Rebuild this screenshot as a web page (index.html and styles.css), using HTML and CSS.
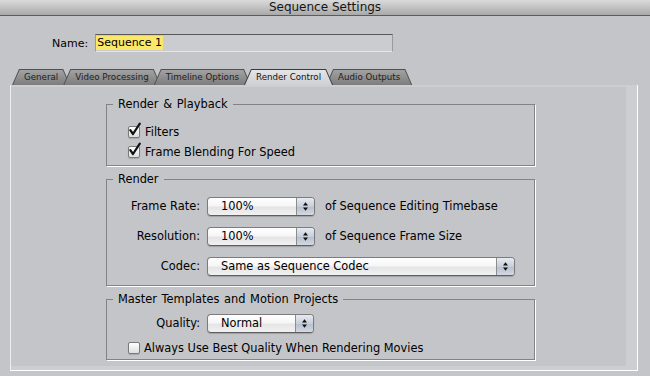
FILE: index.html
```html
<!DOCTYPE html>
<html>
<head>
<meta charset="utf-8">
<link rel="stylesheet" href="styles.css">
</head>
<body>
<div class="titlebar">Sequence Settings</div>
<div class="name-row">
  <span class="name-label">Name:</span>
  <div class="name-field"><span class="sel">Sequence 1</span></div>
</div>
<div class="tabs">
  <div class="tab"><span class="tab-in">General</span></div>
  <div class="tab"><span class="tab-in">Video Processing</span></div>
  <div class="tab"><span class="tab-in">Timeline Options</span></div>
  <div class="tab active"><span class="tab-in">Render Control</span></div>
  <div class="tab"><span class="tab-in">Audio Outputs</span></div>
</div>
<div class="panel">
  <div class="panel-body">
    <fieldset class="group g1">
      <legend>Render &amp; Playback</legend>
      <div class="checks">
        <div class="cb-row"><span class="cb"><svg class="check" viewBox="0 0 13 14"><path d="M2.3 7.2 L5 11 L11.8 0.6"/></svg></span><span>Filters</span></div>
        <div class="cb-row"><span class="cb"><svg class="check" viewBox="0 0 13 14"><path d="M2.3 7.2 L5 11 L11.8 0.6"/></svg></span><span>Frame Blending For Speed</span></div>
      </div>
    </fieldset>
    <fieldset class="group g2">
      <legend>Render</legend>
      <div class="form">
        <span class="lbl">Frame Rate:</span>
        <div class="popup"><span class="popup-text">100%</span><span class="arrows"><svg viewBox="0 0 7 11"><path d="M3.5 1.2 L6 4.6 L1 4.6Z M1 6.4 L6 6.4 L3.5 9.8Z"/></svg></span></div>
        <span class="note">of Sequence Editing Timebase</span>
        <span class="lbl">Resolution:</span>
        <div class="popup"><span class="popup-text">100%</span><span class="arrows"><svg viewBox="0 0 7 11"><path d="M3.5 1.2 L6 4.6 L1 4.6Z M1 6.4 L6 6.4 L3.5 9.8Z"/></svg></span></div>
        <span class="note">of Sequence Frame Size</span>
        <span class="lbl">Codec:</span>
        <div class="popup codec"><span class="popup-text">Same as Sequence Codec</span><span class="arrows"><svg viewBox="0 0 7 11"><path d="M3.5 1.2 L6 4.6 L1 4.6Z M1 6.4 L6 6.4 L3.5 9.8Z"/></svg></span></div>
      </div>
    </fieldset>
    <fieldset class="group g3">
      <legend>Master Templates and Motion Projects</legend>
      <div class="form form3">
        <span class="lbl">Quality:</span>
        <div class="popup"><span class="popup-text">Normal</span><span class="arrows"><svg viewBox="0 0 7 11"><path d="M3.5 1.2 L6 4.6 L1 4.6Z M1 6.4 L6 6.4 L3.5 9.8Z"/></svg></span></div>
      </div>
      <div class="cb-row single"><span class="cb"></span><span>Always Use Best Quality When Rendering Movies</span></div>
    </fieldset>
  </div>
</div>
</body>
</html>
```
FILE: styles.css
```css
html, body {
  margin: 0;
  padding: 0;
}
body {
  width: 650px;
  height: 376px;
  overflow: hidden;
  background: #c4c5c9;
  font-family: "DejaVu Sans", sans-serif;
  font-size: 11.4px;
  color: #000;
}
.titlebar {
  height: 15px;
  line-height: 15px;
  border-bottom: 1px solid #5c5c5c;
  background: linear-gradient(#dadada, #a9a9a9);
  text-align: center;
  font-size: 12px;
  color: #151515;
}
.name-row {
  display: flex;
  align-items: center;
  gap: 7px;
  margin-top: 18px;
  padding-left: 52px;
  height: 18px;
  font-size: 11px;
}
.name-field {
  box-sizing: border-box;
  width: 298px;
  height: 18px;
  border: 1px solid #9a9a9a;
  border-top-color: #585858;
  border-bottom-color: #e6e6e6;
  background: #cbccd0;
  display: flex;
  align-items: center;
}
.sel {
  background: #fbe86a;
  line-height: 14px;
  padding: 0 1px;
}
.tabs {
  display: flex;
  margin-top: 17px;
  padding-left: 12px;
  height: 16px;
}
.tab {
  position: relative;
  height: 16px;
  box-sizing: border-box;
  padding: 1px 1px 0 1px;
  background: #505050;
  clip-path: polygon(7px 0, calc(100% - 7px) 0, 100% 100%, 0 100%);
  margin-left: -7px;
}
.tab:first-child {
  margin-left: 0;
}
.tab-in {
  display: block;
  height: 15px;
  line-height: 15px;
  padding: 0 11px;
  font-size: 8.7px;
  color: #1e1e1e;
  background: linear-gradient(#a2a2a2, #7c7c7c);
  clip-path: polygon(6.6px 0, calc(100% - 6.6px) 0, 100% 100%, 0 100%);
}
.tab.active {
  z-index: 2;
  background: #3a3a3a;
}
.tab.active .tab-in {
  background: linear-gradient(#e4e5e7, #cfd0d4);
  color: #111;
}
.panel {
  box-sizing: border-box;
  margin-left: 10px;
  width: 628px;
  height: 286px;
  border-left: 1px solid #eeeeee;
  border-right: 1px solid #ffffff;
  border-bottom: 1px solid #ffffff;
  background: #cdced2;
  padding: 2px 11px 4px 0;
}
.panel-body {
  height: 100%;
  background: #c4c5c9;
  padding-left: 95px;
  padding-top: 10px;
  box-sizing: border-box;
}
.group {
  box-sizing: border-box;
  width: 429px;
  margin: 0;
  padding: 0;
  border: 1px solid #838383;
  box-shadow: 1px 1px 0 #ffffff;
  min-inline-size: 0;
}
.group legend {
  margin-left: 6px;
  padding: 0 5px;
  line-height: 14px;
  word-spacing: 1px;
}
.g1 {
  padding: 11px 0 3px 0;
}
.g2 {
  margin-top: 6px;
  padding: 10px 0 9px 0;
}
.g3 {
  margin-top: 6px;
  padding: 7px 0 3px 0;
}
.checks {
  padding-left: 21px;
}
.cb-row {
  display: flex;
  align-items: center;
  gap: 5px;
  height: 20px;
}
.cb-row.single {
  height: 16px;
  margin-top: 7px;
  padding-left: 21px;
  gap: 4px;
}
.cb {
  position: relative;
  display: inline-block;
  box-sizing: border-box;
  width: 12px;
  height: 12px;
  border: 1px solid #7a7a7a;
  border-radius: 2px;
  background: linear-gradient(#ffffff, #dedede);
  box-shadow: 0 1px 1px rgba(0, 0, 0, 0.15);
}
.check {
  position: absolute;
  left: -1px;
  top: -4px;
  width: 13px;
  height: 14px;
  overflow: visible;
}
.check path {
  fill: none;
  stroke: #111;
  stroke-width: 2.2;
  stroke-linecap: round;
  stroke-linejoin: round;
}
.form {
  display: grid;
  grid-template-columns: 93px 108px auto;
  grid-auto-rows: 20px;
  column-gap: 7px;
  row-gap: 10px;
  align-items: center;
}
.lbl {
  text-align: right;
}
.note {
  margin-left: 3px;
}
.popup {
  box-sizing: border-box;
  height: 19px;
  display: flex;
  align-items: stretch;
  border: 1px solid #7c7c7c;
  border-bottom-color: #5e5e5e;
  border-radius: 4px;
  overflow: hidden;
  background: linear-gradient(#ffffff 0%, #f6f6f6 45%, #e5e5e5 55%, #f1f1f1 100%);
  box-shadow: 0 1px 1px rgba(0, 0, 0, 0.18);
}
.popup.codec {
  grid-column: 2 / span 2;
  width: 308px;
}
.popup-text {
  flex: 1;
  padding-left: 13px;
  line-height: 17px;
}
.arrows {
  width: 17px;
  border-left: 1px solid #8c8c8c;
  background: linear-gradient(#e6eaf1, #c7cedb 50%, #b6bfce 51%, #d3d9e3);
  display: flex;
  align-items: center;
  justify-content: center;
}
.arrows svg {
  width: 7px;
  height: 11px;
}
.arrows path {
  fill: #111;
}
.form3 {
  grid-template-columns: 93px 107px;
}
```
